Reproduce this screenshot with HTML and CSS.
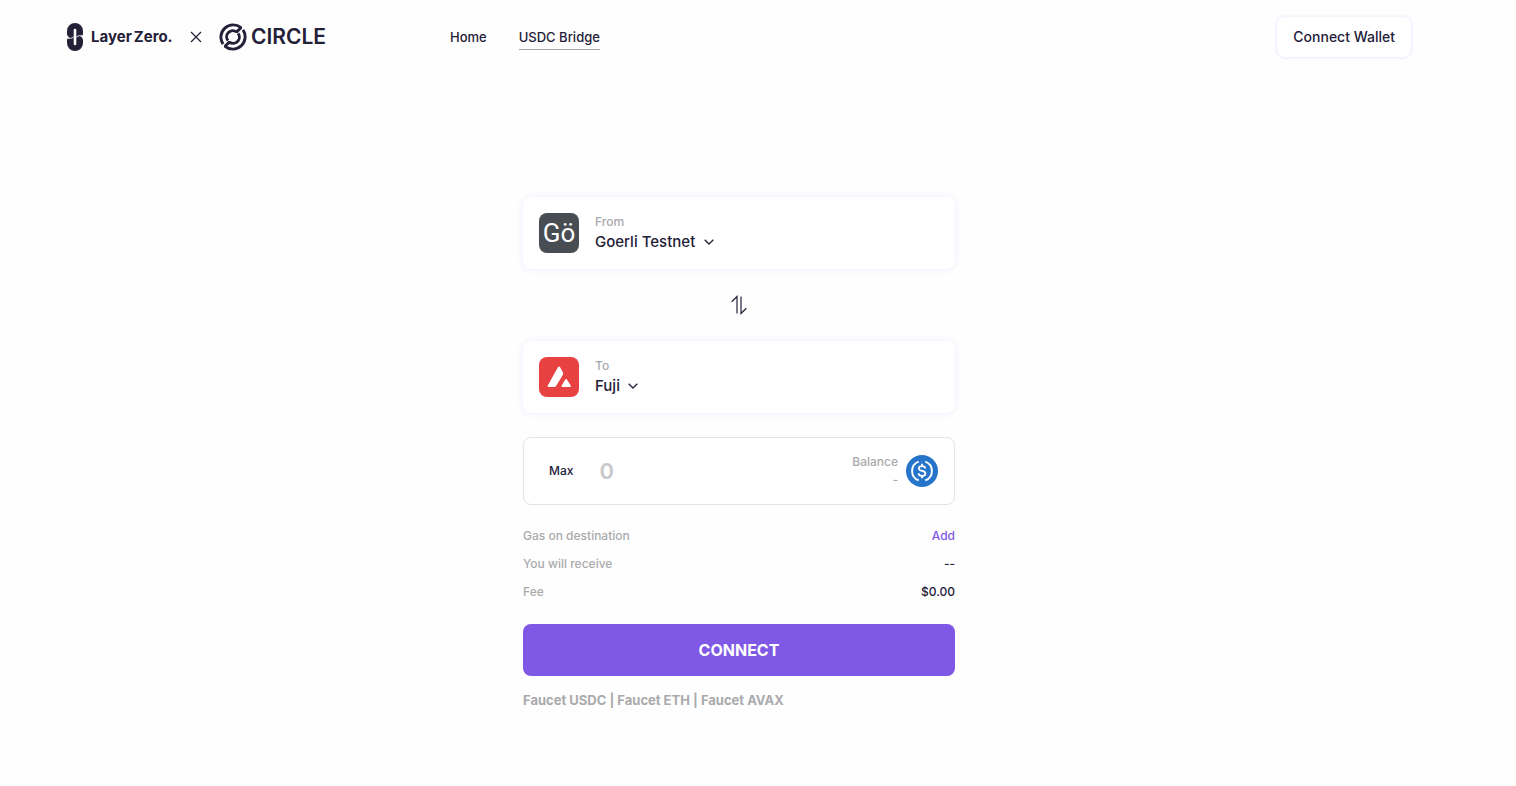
FILE: index.html
```html
<!DOCTYPE html>
<html lang="en">
<head>
<meta charset="utf-8">
<title>USDC Bridge</title>
<link rel="stylesheet" href="styles.css">
</head>
<body>
<header class="header">
  <div class="brand">
    <svg class="layerzero-mark" viewBox="0 0 16 28" aria-hidden="true">
      <path fill="currentColor" d="M8 0a8 8 0 0 1 8 8v2.500q0 2.700-2.700 3 2.700.8 2.700 3.500v3a8 8 0 0 1-16 0v-2.500q0-2.700 2.700-3Q0 13.700 0 11V8a8 8 0 0 1 8-8z"/>
      <path fill="none" stroke="#fff" stroke-width="2.600" stroke-linecap="round" d="M8 7v14"/>
      <path fill="none" stroke="#fff" stroke-width=".9" d="M1 15.300h2.500q2.500 0 3.500-2M15 12.700h-2.500q-2.500 0-3.500 2"/>
    </svg>
    <span class="layerzero-name">Layer<span class="zero">Zero.</span></span>
    <svg class="times" viewBox="0 0 12 12" aria-hidden="true"><path fill="none" stroke="currentColor" stroke-width="1.200" d="M1 1l10 10M11 1 1 11"/></svg>
    <svg class="circle-mark" viewBox="0 0 28 28" aria-hidden="true">
      <g fill="none" stroke="currentColor" stroke-width="2.900" stroke-linejoin="bevel">
        <path d="M4 21.100A12.300 12.300 0 0 1 22 4.700L17.600 8.900A6.200 6.200 0 0 0 9 17.700"/>
        <path d="M24 6.900A12.300 12.300 0 0 1 6 23.300L10.400 19.100A6.200 6.200 0 0 0 19 10.300"/>
      </g>
    </svg>
    <span class="circle-name">CIRCLE</span>
  </div>
  <nav class="nav">
    <a href="#home">Home</a>
    <a href="#bridge" class="active" aria-current="page">USDC Bridge</a>
  </nav>
  <button class="wallet" type="button">Connect Wallet</button>
</header>

<main class="bridge">
  <section class="card">
    <svg class="chain-icon" viewBox="0 0 40 40" aria-hidden="true">
      <rect width="40" height="40" rx="8" fill="#474d53"/>
      <text class="chain-letters" x="20" y="29" text-anchor="middle">Gö</text>
    </svg>
    <div class="chain">
      <label class="caption" for="from">From</label>
      <div class="picker">
        <select id="from"><option>Goerli Testnet</option></select>
        <svg class="chevron" viewBox="0 0 10 6" aria-hidden="true"><path fill="none" stroke="currentColor" stroke-width="1.300" d="M.7.700 5 5 9.300.700"/></svg>
      </div>
    </div>
  </section>

  <button class="swap" type="button" aria-label="Swap networks">
    <svg viewBox="0 0 16 20" aria-hidden="true">
      <path fill="none" stroke="currentColor" stroke-width="1.200" d="M.7 6.700 6 1.500v17M10 1.500v17l5.300-5.200"/>
    </svg>
  </button>

  <section class="card">
    <svg class="chain-icon" viewBox="0 0 40 40" aria-hidden="true">
      <rect width="40" height="40" rx="8" fill="#e84142"/>
      <path fill="#fff" d="M18.900 10.300q1.100-1.700 2.200 0l2.700 4.800q.8 1.500 0 3L17.400 28.500q-.9 1.500-2.500 1.500H9.600q-1.700 0-.8-1.600zM26.100 22.700q1-1.500 2 0l3.600 5.800q.8 1.500-.8 1.500h-7.400q-1.600 0-.8-1.500z"/>
    </svg>
    <div class="chain">
      <label class="caption" for="to">To</label>
      <div class="picker">
        <select id="to"><option>Fuji</option></select>
        <svg class="chevron" viewBox="0 0 10 6" aria-hidden="true"><path fill="none" stroke="currentColor" stroke-width="1.300" d="M.7.700 5 5 9.300.700"/></svg>
      </div>
    </div>
  </section>

  <section class="amount">
    <button class="max" type="button">Max</button>
    <input class="value" type="text" inputmode="decimal" placeholder="0" aria-label="Amount">
    <div class="balance"><span>Balance</span><span>-</span></div>
    <svg class="usdc" viewBox="0 0 32 32" aria-hidden="true">
      <circle cx="16" cy="16" r="16" fill="#2775ca"/>
      <g fill="none" stroke="#fff" stroke-width="1.900">
        <path d="M12.700 6.600a10 10 0 0 0 0 18.800M19.300 6.600a10 10 0 0 1 0 18.800"/>
        <path stroke-width="1.800" d="M19.200 13.600c0-1.600-1.300-2.500-3.200-2.500s-3.100.9-3.100 2.300c0 3.300 6.500 1.700 6.500 5 0 1.500-1.400 2.500-3.400 2.500s-3.400-1-3.400-2.600M16 8.800v2.400M16 20.800v2.400"/>
      </g>
    </svg>
  </section>

  <dl class="details">
    <div class="row"><dt>Gas on destination</dt><dd><button class="add" type="button">Add</button></dd></div>
    <div class="row"><dt>You will receive</dt><dd>--</dd></div>
    <div class="row"><dt>Fee</dt><dd>$0.00</dd></div>
  </dl>

  <button class="connect" type="button">CONNECT</button>

  <p class="faucets"><a href="#usdc">Faucet USDC</a> | <a href="#eth">Faucet ETH</a> | <a href="#avax">Faucet AVAX</a></p>
</main>
</body>
</html>
```

FILE: styles.css
```css
* {
  box-sizing: border-box;
}

body {
  margin: 0;
  padding-right: 38px;
  background: #fefefe;
  color: #232038;
  font-family: Inter, "Liberation Sans", sans-serif;
  font-size: 12px;
  font-weight: 500;
  line-height: 18px;
}

button,
input,
select {
  margin: 0;
  padding: 0;
  border: 0;
  background: none;
  color: inherit;
  font: inherit;
}

button {
  cursor: pointer;
}

a {
  color: inherit;
  text-decoration: none;
}

svg {
  display: block;
  flex: none;
}

.header {
  display: flex;
  align-items: center;
  padding: 17px 67px 0;
}

.brand {
  display: flex;
  align-items: center;
  width: 383px;
}

.layerzero-mark {
  width: 16px;
  height: 28px;
  margin-right: 8px;
}

.layerzero-name {
  width: 81px;
  font-size: 15px;
  font-weight: 700;
  white-space: nowrap;
}

.zero {
  margin-left: 2px;
}

.times {
  width: 12px;
  height: 12px;
  margin: 0 17px 0 18px;
}

.circle-mark {
  width: 28px;
  height: 28px;
  margin-right: 4px;
}

.circle-name {
  font-size: 21px;
  font-weight: 600;
}

.nav {
  display: flex;
  gap: 32px;
  font-size: 13px;
}

.nav a {
  padding: 4px 0 3px;
  border-bottom: 1px solid transparent;
}

.nav .active {
  border-color: #a5a4ad;
}

.wallet {
  height: 40px;
  margin-left: auto;
  padding: 0 16px;
  border-radius: 8px;
  background: #fff;
  box-shadow: 0 0 3px 1px #ebe9fa;
  font-size: 14px;
}

.bridge {
  width: 432px;
  max-width: 100%;
  margin: 140px auto 0;
}

.card {
  display: flex;
  align-items: center;
  gap: 16px;
  padding: 16px;
  border-radius: 8px;
  background: #fff;
  box-shadow: 0 0 6px 1px #f1f0fd;
}

.chain-icon {
  width: 40px;
  height: 40px;
}

.chain-letters {
  fill: #fff;
  font-family: Roboto, sans-serif;
  font-size: 26px;
  font-weight: 400;
}

.caption,
.details dt,
.balance {
  color: #aaaaad;
}

.caption {
  display: block;
}

.picker {
  display: flex;
  align-items: center;
  gap: 8px;
  font-size: 15px;
  line-height: 22px;
}

.picker select {
  appearance: none;
}

.chevron {
  width: 10px;
  height: 6px;
}

.swap {
  display: block;
  margin: 26px auto;
}

.swap svg {
  width: 16px;
  height: 20px;
}

.amount {
  display: flex;
  align-items: center;
  height: 68px;
  margin-top: 24px;
  padding: 0 16px 0 25px;
  border: 1px solid #e3e3e6;
  border-radius: 8px;
  background: #fff;
}

.value {
  flex: 1;
  min-width: 0;
  margin-left: 26px;
  font-size: 22px;
  font-weight: 600;
  line-height: 28px;
}

.value::placeholder {
  color: #c8c8cb;
  opacity: 1;
}

.balance {
  display: grid;
  margin-right: 8px;
  text-align: right;
}

.usdc {
  width: 32px;
  height: 32px;
}

.details {
  display: grid;
  gap: 10px;
  margin: 22px 0 23px;
}

.row {
  display: flex;
  justify-content: space-between;
}

.details dd {
  margin: 0;
}

.add {
  color: #7f58e6;
}

.connect {
  display: block;
  width: 100%;
  height: 52px;
  border-radius: 8px;
  background: #7f58e6;
  color: #fff;
  font-size: 16px;
  font-weight: 700;
}

.faucets {
  margin: 14px 0 0;
  color: #aaaaad;
  font-size: 13px;
  font-weight: 700;
  line-height: 20px;
}
```
